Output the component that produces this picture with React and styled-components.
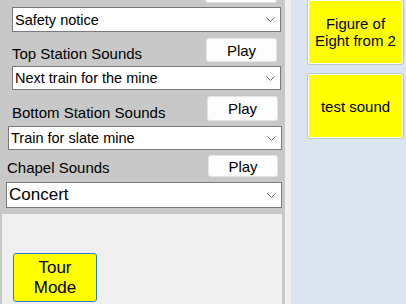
import React from "react";
import styled, { createGlobalStyle } from "styled-components";

const Global = createGlobalStyle`
  html, body { margin: 0; padding: 0; background: #f0f0f0; overflow: hidden; }
  * { box-sizing: border-box; }
`;

const Page = styled.div`
  display: flex;
  width: 406px;
  height: 304px;
  font-family: "Liberation Sans", Arial, sans-serif;
  color: #000;
  overflow: hidden;
`;

const LeftColumn = styled.div`
  width: 285px;
  flex: none;
  background: #c8c8c8;
  display: flex;
  flex-direction: column;
  overflow: hidden;
`;

const Controls = styled.div`
  display: flex;
  flex-direction: column;
`;

const HeaderRow = styled.div`
  display: flex;
  align-items: center;
  justify-content: space-between;
  height: ${(p) => p.$h}px;
  margin-top: ${(p) => p.$mt}px;
  padding-left: ${(p) => p.$pl}px;
  padding-right: ${(p) => p.$pr}px;
`;

const EdgeRow = styled.div`
  display: flex;
  justify-content: flex-end;
  align-items: flex-end;
  height: 3px;
  padding-right: 8px;
  overflow: hidden;
`;

const Label = styled.span`
  font-size: 15px;
  padding-top: ${(p) => p.$drop}px;
  white-space: nowrap;
`;

const PlayButton = styled.button`
  width: ${(p) => p.$w}px;
  height: ${(p) => (p.$edge ? "24px" : "100%")};
  flex: none;
  background: #fdfdfd;
  border: 1px solid #e4e4e4;
  border-radius: 3px;
  font-family: inherit;
  font-size: 15px;
  color: #000;
  padding: 0;
`;

const Combo = styled.div`
  display: flex;
  align-items: center;
  justify-content: space-between;
  height: ${(p) => p.$h}px;
  margin-top: ${(p) => p.$mt}px;
  margin-left: ${(p) => p.$ml}px;
  width: ${(p) => p.$w}px;
  background: #fff;
  border: 1px solid #7a7a7a;
  padding: 0 5px 0 2px;
  font-size: ${(p) => p.$fs}px;
  white-space: nowrap;
`;

const LowerPanel = styled.div`
  flex: 1;
  margin: 6px 3px 0 2px;
  background: #f0f0f0;
  padding: 39px 0 0 11px;
`;

const TourButton = styled.button`
  width: 84px;
  height: 49px;
  background: #ffff00;
  border: 1px solid #2b7bd6;
  border-radius: 3px;
  font-family: inherit;
  font-size: 17px;
  line-height: 20px;
  color: #000;
  padding: 0;
`;

const Strip = styled.div`
  width: 6px;
  flex: none;
  background: #f0f0f0;
`;

const RightPanel = styled.div`
  flex: 1;
  background: #dae5f1;
  display: flex;
  flex-direction: column;
  gap: 8px;
  padding-left: 16px;
`;

const SoundButton = styled.button`
  width: 97px;
  height: 66px;
  flex: none;
  background: #ffff00;
  border: 1px solid #c4c4c4;
  box-shadow: inset 0 0 0 1px #ffffff;
  border-radius: 3px;
  font-family: inherit;
  font-size: 15px;
  line-height: 17px;
  color: #000;
  padding: 0 4px;
  &:first-child { margin-top: -1px; }
`;

const Chevron = () => (
  <svg width="9" height="5" viewBox="0 0 9 5" fill="none">
    <path d="M0.5 0.5 L4.5 4.5 L8.5 0.5" stroke="#6a6a6a" strokeWidth="1" />
  </svg>
);

const ComboBox = ({ text, ...rest }) => (
  <Combo {...rest}>
    <span>{text}</span>
    <Chevron />
  </Combo>
);

export default function App() {
  return (
    <Page>
      <Global />
      <LeftColumn>
        <Controls>
          <EdgeRow>
            <PlayButton $w={72} $edge aria-label="Play" />
          </EdgeRow>
          <ComboBox text="Safety notice" $h={25} $mt={4} $ml={12} $w={269} $fs={14.5} />

          <HeaderRow $h={24} $mt={6} $pl={12} $pr={8}>
            <Label $drop={6}>Top Station Sounds</Label>
            <PlayButton $w={71}>Play</PlayButton>
          </HeaderRow>
          <ComboBox text="Next train for the mine" $h={24} $mt={4} $ml={12} $w={269} $fs={14.5} />

          <HeaderRow $h={25} $mt={6} $pl={12} $pr={7}>
            <Label $drop={7}>Bottom Station Sounds</Label>
            <PlayButton $w={71}>Play</PlayButton>
          </HeaderRow>
          <ComboBox text="Train for slate mine" $h={24} $mt={5} $ml={8} $w={274} $fs={14.5} />

          <HeaderRow $h={22} $mt={5} $pl={7} $pr={7}>
            <Label $drop={2}>Chapel Sounds</Label>
            <PlayButton $w={70}>Play</PlayButton>
          </HeaderRow>
          <ComboBox text="Concert" $h={26} $mt={5} $ml={6} $w={276} $fs={17} />
        </Controls>
        <LowerPanel>
          <TourButton>
            Tour
            <br />
            Mode
          </TourButton>
        </LowerPanel>
      </LeftColumn>
      <Strip />
      <RightPanel>
        <SoundButton>
          Figure of
          <br />
          Eight from 2
        </SoundButton>
        <SoundButton>test sound</SoundButton>
      </RightPanel>
    </Page>
  );
}
